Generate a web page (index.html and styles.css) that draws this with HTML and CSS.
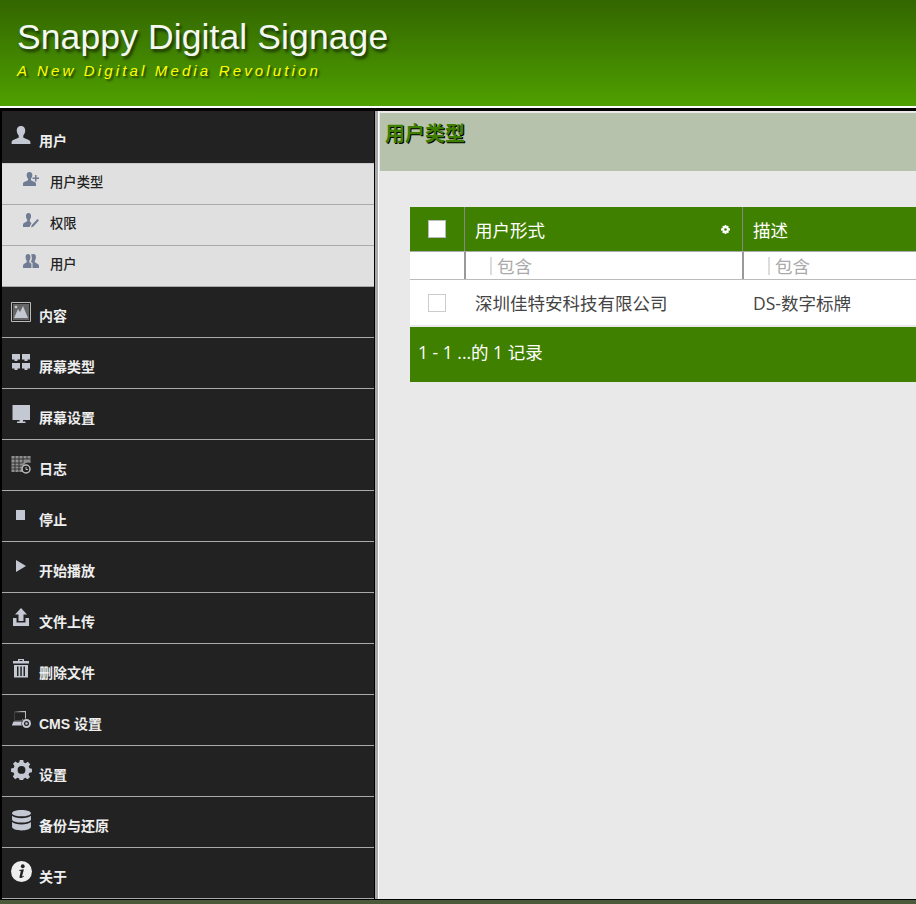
FILE: index.html
```html
<!DOCTYPE html>
<html>
	<head>
		<meta http-equiv="Content-Type" content="text/html; charset=utf-8" />
		<title>用户类型</title>
		<link rel="stylesheet" href="styles.css">
	</head>
	<body>
		<header class="top">
			<div class="logo">
				<div class="logo-name">Snappy Digital Signage</div>
				<div class="logo-sub">A New Digital Media Revolution</div>
			</div>
		</header>
		<div class="main">
			<nav class="side">
				<div class="menu menu-first">
					<svg class="ico" viewBox="0 0 20 20"><path d="M10 0c3 0 4.400 2.200 4.200 5-.1 1.800-.9 3.400-1.900 4.400v2c1 1.200 6.700 1.700 7.100 4.600v2H.6v-2c.4-2.900 6.100-3.400 7.100-4.600v-2C6.700 8.400 5.900 6.800 5.800 5 5.600 2.200 7 0 10 0z"/></svg>
					<span>用户</span>
				</div>
				<div class="sub">
					<div class="sub-item">
						<svg class="sub-ico" viewBox="0 0 16 16"><path d="M6.500 0C8.500 0 9.500 1.500 9.300 3.500 9.200 5 8.600 6 8 6.700v1.500c.8.900 4.500 1.200 5 3.300V14H0v-2.500c.5-2.100 4.200-2.400 5-3.300V6.700C4.400 6 3.800 5 3.700 3.500 3.500 1.500 4.500 0 6.500 0zM12 3h1.500v2.500H16V7h-2.500v2.500H12V7H9.500V5.500H12z"/></svg>
						<span>用户类型</span>
					</div>
					<div class="sub-item">
						<svg class="sub-ico" viewBox="0 0 16 16"><path d="M5.500 0C7.300 0 8.200 1.500 8 3.500 7.900 5 7.400 6 6.800 6.700v1.800L8.500 10 6.500 14H0v-2.500c.4-2.100 3.400-2.400 4.200-3.300V6.700C3.600 6 3.100 5 3 3.500 2.800 1.500 3.700 0 5.500 0zM14.500 6l1.500 1.200-5.500 6.300L8 14.500l.8-2.600z"/></svg>
						<span>权限</span>
					</div>
					<div class="sub-item">
						<svg class="sub-ico" viewBox="0 0 16 16"><path d="M5 0c1.800 0 2.600 1.500 2.400 3.500C7.300 5 6.800 6 6.300 6.700v1.500c.4.500 1.300.8 2.100 1.200V14H0v-2.500c.4-2.100 3-2.400 3.700-3.300V6.700C3.200 6 2.700 5 2.600 3.500 2.400 1.500 3.200 0 5 0zM10.500 0c1.800 0 2.600 1.500 2.400 3.500-.1 1.500-.6 2.500-1.100 3.200v1.500c.7.900 3.700 1.200 4.200 3.300V14H9.500V8.800C8.500 8.300 8 8 7.900 7.500 8.600 6.500 9 5 8.800 3.200 8.700 2 8.400 1 8 .6 8.700.2 9.500 0 10.500 0z"/></svg>
						<span>用户</span>
					</div>
				</div>
				<div class="menu">
					<svg class="ico" viewBox="0 0 20 20"><path fill="none" stroke="#bbb" d="M.5.500h19v19H.5z"/><path fill="#666" d="M2 2h16v16H2z"/><path d="M3 16l4-9 2 3 3-6 5 12z"/><circle cx="5" cy="5" r="1.300"/></svg>
					<span>内容</span>
				</div>
				<div class="menu">
					<svg class="ico" viewBox="0 0 20 20"><path d="M1 1h8v5.500H6.500V8h-3V6.500H1zM11 1h8v5.500h-2.500V8h-3V6.500H11zM1 10h8v5.500H6.500V17h-3v-1.500H1zM11 10h8v5.500h-2.500V17h-3v-1.500H11z"/></svg>
					<span>屏幕类型</span>
				</div>
				<div class="menu">
					<svg class="ico" viewBox="0 0 20 20"><path d="M1.500 1h17.500v15h-7v1.500h2.500V19H6v-1.500h2.500V16h-7z"/></svg>
					<span>屏幕设置</span>
				</div>
				<div class="menu">
					<svg class="ico" viewBox="0 0 20 20"><path fill="#8f8f8f" d="M.5 1h19v7a6 6 0 0 0-7 9H.5z"/><path stroke="#222" stroke-width=".8" d="M.5 4h19M.5 8h11M.5 11h11M.5 14h11M4 1v16M8 1v16M12 1v7M16 1v3"/><circle cx="15" cy="14" r="4" fill="none" stroke="#bbb" stroke-width="1.500"/><path fill="none" stroke="#bbb" d="M15 12v2.500h2"/></svg>
					<span>日志</span>
				</div>
				<div class="menu">
					<svg class="ico" viewBox="0 0 20 20"><path d="M5 4h9v10H5z"/></svg>
					<span>停止</span>
				</div>
				<div class="menu">
					<svg class="ico" viewBox="0 0 20 20"><path d="M5 3l10 6-10 6z"/></svg>
					<span>开始播放</span>
				</div>
				<div class="menu">
					<svg class="ico" viewBox="0 0 20 20"><path d="M10 0l6 6.500h-3.500V13h-5V6.500H4zM2 10h3.500v4.500h9V10H18v8H2z"/></svg>
					<span>文件上传</span>
				</div>
				<div class="menu">
					<svg class="ico" viewBox="0 0 20 20"><path d="M7 0h6v2h5v2.500H2V2h5zM8.500 1v1h3V1zM3 6h14v12.500H3zM6 7.500V17h1.500V7.500zM9.300 7.500V17h1.500V7.500zM12.500 7.500V17H14V7.500z" fill-rule="evenodd"/></svg>
					<span>删除文件</span>
				</div>
				<div class="menu">
					<svg class="ico" viewBox="0 0 20 20"><path d="M2.500 1H15v7.500a5 5 0 0 0-3.800 2H3.700V2.200h10" fill="#bbb"/><path fill="#222" d="M3.700 2.200H14v7h-2.500l-1 1.300H3.700z"/><path d="M2.500 11.500h8.300a5 5 0 0 0 .2 4H.8z"/><circle cx="15.500" cy="13.500" r="4.500"/><circle cx="15.500" cy="13.500" r="2.500" fill="#222"/><circle cx="15.500" cy="13.500" r="1.200"/></svg>
					<span>CMS 设置</span>
				</div>
				<div class="menu">
					<svg class="ico ico-big" viewBox="0 0 22 22"><path fill-rule="evenodd" d="M9 0h4l.6 3 2.100.9L18.300 2.200 21 5l-1.700 2.500.9 2.100 2.800.6v4l-3 .6-.9 2.100 1.700 2.600-2.800 2.800-2.600-1.700-2.100.9-.6 2.800H9l-.6-3-2.100-.9-2.600 1.700L1 19l1.700-2.500-.9-2.100L-1 13.800V9.800l3-.6.900-2.100L1.200 4.500 4 1.700 6.500 3.400l2-.9zM11 7a4.500 4.500 0 1 0 0 9 4.500 4.500 0 0 0 0-9z" transform="translate(1 1) scale(.91)"/></svg>
					<span>设置</span>
				</div>
				<div class="menu">
					<svg class="ico ico-big" viewBox="0 0 20 20"><path d="M10 0c5 0 9 1.300 9 3s-4 3-9 3-9-1.300-9-3 4-3 9-3zM1 5.500C2.500 7 6 7.800 10 7.800s7.500-.8 9-2.300V9c0 1.700-4 3-9 3s-9-1.300-9-3zM1 11.500C2.500 13 6 13.800 10 13.800s7.500-.8 9-2.300V16c0 2-4 3.500-9 3.500S1 18 1 16z"/></svg>
					<span>备份与还原</span>
				</div>
				<div class="menu">
					<svg class="ico ico-big" viewBox="0 0 20 20"><circle cx="10" cy="10" r="10" fill="#eee"/><circle cx="11.200" cy="5" r="1.800" fill="#222"/><path fill="#222" d="M7.800 8.500l4.500-.7-1.700 6.500c-.1.600.3.600 1.500-.2l.3.500c-1.800 1.900-4.700 2.500-4.300.3l1.200-4.900c.1-.7-.6-.8-1.500-.7z"/></svg>
					<span>关于</span>
				</div>
			</nav>
			<div class="divider"></div>
			<section class="content">
				<h1 class="title">用户类型</h1>
				<div class="grid">
					<div class="row row-head">
						<div class="cell cell-check"><i class="box box-white"></i></div>
						<div class="cell cell-name">用户形式<svg class="gear" viewBox="0 0 10 10"><path d="M4 0h2v1.500l1.500-.8 1.200 1.200L8 3.300 10 4v2l-1.800.5.600 1.600-1.200 1.200L6 8.500V10H4V8.500l-1.500.8-1.200-1.200.8-1.600L0 6V4l2.100-.7-.8-1.400L2.500.7 4 1.500zM5 3.500a1.500 1.500 0 1 0 0 3 1.500 1.500 0 0 0 0-3z" fill-rule="evenodd"/></svg></div>
						<div class="cell cell-desc">描述</div>
					</div>
					<div class="row row-filter">
						<div class="cell cell-check"></div>
						<div class="cell cell-name"><span class="filter">包含</span></div>
						<div class="cell cell-desc"><span class="filter">包含</span></div>
					</div>
					<div class="row row-data">
						<div class="cell cell-check"><i class="box"></i></div>
						<div class="cell cell-name">深圳佳特安科技有限公司</div>
						<div class="cell cell-desc">DS-数字标牌</div>
					</div>
					<div class="grid-foot">1 - 1 ...的 1 记录</div>
				</div>
			</section>
		</div>
		<div class="bottom"></div>
	</body>
</html>
```

FILE: styles.css
```css
html,body{
	margin: 0;
	height: 904px;
	overflow: hidden;
	background: #000;
}
body{
	display: flex;
	flex-direction: column;
	font-family: "Liberation Sans", "Noto Sans CJK SC", sans-serif;
}
.top{
	height: 106px;
	flex: none;
	background: linear-gradient(#336600, #4fa000);
	border-bottom: 2px solid #fff;
	box-sizing: content-box;
	padding-left: 17px;
}
.logo{
	padding-top: 16px;
}
.logo-name{
	color: #f4f8f2;
	font-size: 35.500px;
	line-height: 42px;
	letter-spacing: 0.100px;
	text-shadow: 2px 3px 3px rgba(0,0,0,.6);
}
.logo-sub{
	margin-top: 4px;
	color: #ffff00;
	font-size: 15px;
	line-height: 18px;
	font-style: italic;
	letter-spacing: 3.150px;
	text-shadow: 2px 2px 2px rgba(0,0,0,.6);
}
.main{
	flex: 1;
	display: flex;
	min-height: 0;
	padding-top: 3px;
}
.side{
	width: 372px;
	flex: none;
	margin-left: 2px;
	background: #222;
	height: 788px;
}
.menu{
	height: 50px;
	border-bottom: 1px solid #aaa;
	display: flex;
	align-items: flex-start;
	position: relative;
	color: #eee;
	font-size: 14px;
	font-weight: bold;
	padding-left: 37px;
}
.menu span{
	margin-top: 20px;
	line-height: 18px;
}
.menu-first{
	height: 52px;
	border-bottom: none;
}
.menu-first span{
	margin-top: 21px;
}
.ico{
	position: absolute;
	left: 9px;
	top: 15px;
	width: 20px;
	height: 20px;
	fill: #c4c8d2;
}
.ico-big{
	width: 21px;
	height: 21px;
	left: 9px;
	top: 13px;
}
.sub{
	border-top: 1px solid #ccc;
	border-bottom: 1px solid #aaa;
	background: #e0e0e0;
}
.sub-item{
	height: 40px;
	border-bottom: 1px solid #aaa;
	display: flex;
	color: #222;
	font-size: 13.330px;
	font-weight: 500;
	padding-left: 48px;
	position: relative;
}
.sub-item:last-child{
	border-bottom: none;
}
.sub-item span{
	margin-top: 10px;
	line-height: 18px;
}
.sub-ico{
	position: absolute;
	left: 21px;
	top: 8px;
	width: 16px;
	height: 16px;
	fill: #6f7c94;
}
.divider{
	width: 3px;
	flex: none;
	background: #a8a8a8;
	border-right: 1px solid #fff;
	margin-left: 1px;
	height: 788px;
}
.content{
	flex: 1;
	min-width: 0;
	height: 788px;
	background: #e9e9e9;
	padding-top: 2px;
	box-sizing: border-box;
	font-family: "Open Sans", "Noto Sans CJK SC", sans-serif;
}
.title{
	margin: 0 0 36px 1px;
	height: 58px;
	background: #b6c2ab;
	color: #3f7f00;
	font-family: "Liberation Sans", "Noto Sans CJK SC", sans-serif;
	font-size: 20px;
	line-height: 42px;
	padding-left: 5px;
	text-shadow: 1px 1px 0 #000;
}
.grid{
	margin-left: 31px;
	width: 560px;
	font-size: 17.500px;
}
.row{
	display: flex;
}
.cell{
	box-sizing: border-box;
	display: flex;
	align-items: center;
	position: relative;
}
.cell-check{
	width: 54px;
	justify-content: center;
	flex: none;
}
.cell-name{
	width: 278px;
	flex: none;
	padding-left: 10px;
	border-left: 1px solid #888;
}
.cell-desc{
	flex: 1;
	padding-left: 10px;
	border-left: 1px solid #888;
}
.row-head{
	height: 45px;
	background: #408000;
	color: #fff;
	border-bottom: 1px solid #aaa;
	box-sizing: border-box;
}
.row-filter{
	height: 28px;
	background: #fff;
	border-bottom: 1px solid #bbb;
	box-sizing: border-box;
	color: #aaa;
}
.row-filter .cell-name,
.row-filter .cell-desc{
	border-left: 2px solid #999;
	padding-left: 24px;
}
.filter{
	border-left: 2px solid #ddd;
	padding-left: 5px;
	line-height: 18px;
}
.row-data{
	height: 45px;
	background: #fff;
	color: #444;
	margin-bottom: 2px;
}
.row-data .cell-name,
.row-data .cell-desc{
	border-left: 1px solid #fff;
}
.box{
	display: block;
	width: 16px;
	height: 16px;
	background: #fff;
	border: 1px solid #ccc;
}
.box-white{
	border-color: #bbb;
}
.gear{
	position: absolute;
	right: 12px;
	top: 18px;
	width: 9px;
	height: 9px;
	fill: #fff;
}
.grid-foot{
	height: 55px;
	line-height: 50px;
	background: #408000;
	color: #fff;
	padding-left: 8px;
}
.bottom{
	flex: none;
	height: 4px;
	background: #4a5a3a;
	border-top: 1px solid #000;
}
```
